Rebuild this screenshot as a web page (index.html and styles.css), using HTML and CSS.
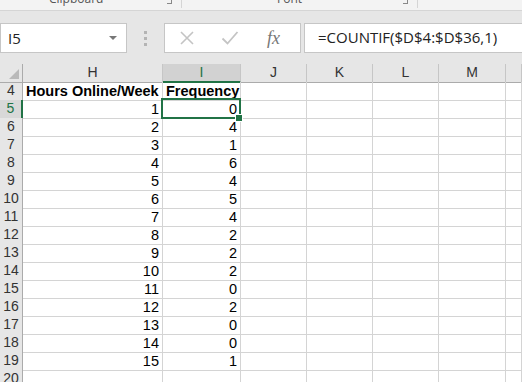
FILE: index.html
```html
<!DOCTYPE html>
<html lang="en">
<head>
    <meta charset="UTF-8">
    <title>Frequency - Excel</title>
    <link rel="stylesheet" href="styles.css">
</head>
<body>

<div class="ribbon">
    <div class="group group-clipboard">
        <span class="group-label">Clipboard</span>
        <span class="launcher"></span>
    </div>
    <div class="group group-font">
        <span class="group-label">Font</span>
        <span class="launcher"></span>
    </div>
</div>

<div class="formula-bar">
    <div class="name-box">
        <span class="name-text">I5</span>
        <span class="caret"></span>
    </div>
    <div class="grip"><i></i><i></i><i></i></div>
    <div class="fx-buttons">
        <svg class="btn-icon" width="16" height="16" viewBox="0 0 16 16">
            <path d="M2 2 L14 14 M14 2 L2 14" stroke="#c4c4c4" stroke-width="1.6" fill="none"/>
        </svg>
        <svg class="btn-icon" width="18" height="16" viewBox="0 0 18 16">
            <path d="M1.5 8.5 L6.5 13.5 L16.5 2" stroke="#c4c4c4" stroke-width="1.8" fill="none"/>
        </svg>
        <span class="fx">fx</span>
    </div>
    <div class="formula-input">=COUNTIF($D$4:$D$36,1)</div>
</div>

<div class="sheet">
    <div class="row head-row">
        <div class="rh corner"><span class="corner-tri"></span></div>
        <div class="ch">H</div>
        <div class="ch active">I</div>
        <div class="ch">J</div>
        <div class="ch">K</div>
        <div class="ch">L</div>
        <div class="ch">M</div>
        <div class="ch"></div>
    </div>

    <div class="row">
        <div class="rh">4</div>
        <div class="c bold">Hours Online/Week</div>
        <div class="c bold">Frequency</div>
        <div class="c"></div><div class="c"></div><div class="c"></div><div class="c"></div><div class="c"></div>
    </div>
    <div class="row">
        <div class="rh active">5</div>
        <div class="c num">1</div>
        <div class="c num selected">0</div>
        <div class="c"></div><div class="c"></div><div class="c"></div><div class="c"></div><div class="c"></div>
    </div>
    <div class="row">
        <div class="rh">6</div>
        <div class="c num">2</div>
        <div class="c num">4</div>
        <div class="c"></div><div class="c"></div><div class="c"></div><div class="c"></div><div class="c"></div>
    </div>
    <div class="row">
        <div class="rh">7</div>
        <div class="c num">3</div>
        <div class="c num">1</div>
        <div class="c"></div><div class="c"></div><div class="c"></div><div class="c"></div><div class="c"></div>
    </div>
    <div class="row">
        <div class="rh">8</div>
        <div class="c num">4</div>
        <div class="c num">6</div>
        <div class="c"></div><div class="c"></div><div class="c"></div><div class="c"></div><div class="c"></div>
    </div>
    <div class="row">
        <div class="rh">9</div>
        <div class="c num">5</div>
        <div class="c num">4</div>
        <div class="c"></div><div class="c"></div><div class="c"></div><div class="c"></div><div class="c"></div>
    </div>
    <div class="row">
        <div class="rh">10</div>
        <div class="c num">6</div>
        <div class="c num">5</div>
        <div class="c"></div><div class="c"></div><div class="c"></div><div class="c"></div><div class="c"></div>
    </div>
    <div class="row">
        <div class="rh">11</div>
        <div class="c num">7</div>
        <div class="c num">4</div>
        <div class="c"></div><div class="c"></div><div class="c"></div><div class="c"></div><div class="c"></div>
    </div>
    <div class="row">
        <div class="rh">12</div>
        <div class="c num">8</div>
        <div class="c num">2</div>
        <div class="c"></div><div class="c"></div><div class="c"></div><div class="c"></div><div class="c"></div>
    </div>
    <div class="row">
        <div class="rh">13</div>
        <div class="c num">9</div>
        <div class="c num">2</div>
        <div class="c"></div><div class="c"></div><div class="c"></div><div class="c"></div><div class="c"></div>
    </div>
    <div class="row">
        <div class="rh">14</div>
        <div class="c num">10</div>
        <div class="c num">2</div>
        <div class="c"></div><div class="c"></div><div class="c"></div><div class="c"></div><div class="c"></div>
    </div>
    <div class="row">
        <div class="rh">15</div>
        <div class="c num">11</div>
        <div class="c num">0</div>
        <div class="c"></div><div class="c"></div><div class="c"></div><div class="c"></div><div class="c"></div>
    </div>
    <div class="row">
        <div class="rh">16</div>
        <div class="c num">12</div>
        <div class="c num">2</div>
        <div class="c"></div><div class="c"></div><div class="c"></div><div class="c"></div><div class="c"></div>
    </div>
    <div class="row">
        <div class="rh">17</div>
        <div class="c num">13</div>
        <div class="c num">0</div>
        <div class="c"></div><div class="c"></div><div class="c"></div><div class="c"></div><div class="c"></div>
    </div>
    <div class="row">
        <div class="rh">18</div>
        <div class="c num">14</div>
        <div class="c num">0</div>
        <div class="c"></div><div class="c"></div><div class="c"></div><div class="c"></div><div class="c"></div>
    </div>
    <div class="row">
        <div class="rh">19</div>
        <div class="c num">15</div>
        <div class="c num">1</div>
        <div class="c"></div><div class="c"></div><div class="c"></div><div class="c"></div><div class="c"></div>
    </div>
    <div class="row">
        <div class="rh">20</div>
        <div class="c"></div>
        <div class="c"></div>
        <div class="c"></div><div class="c"></div><div class="c"></div><div class="c"></div><div class="c"></div>
    </div>
</div>

</body>
</html>
```

FILE: styles.css
```css
* {
    box-sizing: border-box;
}
body {
    margin: 0;
    width: 522px;
    height: 382px;
    overflow: hidden;
    background-color: #e6e6e6;
    font-family: "Liberation Sans", Arial, sans-serif;
    color: #000;
}

/* ribbon strip, only the group captions show */
.ribbon {
    display: flex;
    height: 11px;
    background-color: #f3f3f3;
    border-bottom: 1px solid #d5d5d5;
    overflow: hidden;
}
.group {
    display: flex;
    align-items: flex-start;
    border-right: 1px solid #d5d5d5;
    height: 8px;
}
.group-clipboard {
    width: 182px;
    padding-left: 49px;
}
.group-font {
    width: 236px;
    padding-left: 95px;
}
.group-label {
    font-family: "Open Sans", "Noto Sans", sans-serif;
    font-size: 12px;
    line-height: 14px;
    margin-top: -8px;
    color: #555;
}
.launcher {
    margin-left: auto;
    margin-right: 9px;
    width: 5px;
    height: 4px;
    border-right: 1px solid #888;
    border-bottom: 1px solid #888;
}

/* formula bar */
.formula-bar {
    display: flex;
    align-items: flex-start;
    height: 53px;
    padding-top: 12px;
}
.name-box {
    display: flex;
    align-items: center;
    width: 127px;
    height: 30px;
    background-color: #fff;
    border: 1px solid #c6c6c6;
    padding-left: 7px;
}
.name-text {
    font-family: "Open Sans", "Noto Sans", sans-serif;
    font-size: 15px;
    color: #222;
}
.caret {
    margin-left: auto;
    margin-right: 9px;
    width: 0;
    height: 0;
    border-left: 4px solid transparent;
    border-right: 4px solid transparent;
    border-top: 4px solid #777;
}
.grip {
    display: flex;
    flex-direction: column;
    gap: 3px;
    width: 37px;
    padding-top: 8px;
    padding-left: 17px;
}
.grip i {
    display: block;
    width: 3px;
    height: 3px;
    background-color: #b4b4b4;
}
.fx-buttons {
    display: flex;
    align-items: center;
    width: 137px;
    height: 30px;
    background-color: #fff;
    border: 1px solid #c6c6c6;
    padding-left: 14px;
}
.btn-icon {
    display: block;
}
.btn-icon + .btn-icon {
    margin-left: 26px;
}
.fx {
    margin-left: 28px;
    font-family: "Liberation Serif", serif;
    font-style: italic;
    font-size: 18px;
    color: #777;
}
.formula-input {
    flex: 1;
    height: 30px;
    margin-left: 3px;
    background-color: #fff;
    border: 1px solid #c6c6c6;
    border-right: none;
    padding-left: 13px;
    font-family: "Open Sans", "Noto Sans", sans-serif;
    font-size: 15px;
    line-height: 27px;
    color: #222;
}

/* grid */
.sheet {
    background-color: #fff;
}
.row {
    display: grid;
    grid-template-columns: 23px 140px 78px 66px 66px 66px 67px 1fr;
    height: 18px;
}
.rh {
    background-color: #e6e6e6;
    border-right: 1px solid #ababab;
    border-bottom: 1px solid #d4d4d4;
    font-size: 14px;
    line-height: 17px;
    text-align: center;
    color: #333;
}
.rh.active {
    background-color: #d8d8d8;
    border-right: 2px solid #217346;
    color: #217346;
}
.head-row .rh {
    border-bottom: 1px solid #ababab;
}
.corner {
    position: relative;
}
.corner-tri {
    position: absolute;
    right: 3px;
    bottom: 3px;
    width: 0;
    height: 0;
    border-left: 10px solid transparent;
    border-bottom: 10px solid #b9b9b9;
}
.ch {
    background-color: #e6e6e6;
    border-right: 1px solid #c6c6c6;
    border-bottom: 1px solid #ababab;
    font-size: 14px;
    line-height: 17px;
    text-align: center;
    color: #333;
}
.ch.active {
    background-color: #d2d2d2;
    border-bottom: 2px solid #217346;
    color: #217346;
}
.c {
    border-right: 1px solid #d4d4d4;
    border-bottom: 1px solid #d4d4d4;
    padding: 0 3px;
    font-size: 14.5px;
    line-height: 18px;
    white-space: nowrap;
}
.bold {
    font-weight: bold;
}
.num {
    text-align: right;
}
.selected {
    position: relative;
}
.selected::after {
    content: "";
    position: absolute;
    top: -2px;
    left: -2px;
    right: -1px;
    bottom: -1px;
    border: 2px solid #217346;
}
.selected::before {
    content: "";
    position: absolute;
    right: -3px;
    bottom: -4px;
    width: 6px;
    height: 6px;
    background-color: #217346;
    border: 1px solid #fff;
    z-index: 1;
}
```
